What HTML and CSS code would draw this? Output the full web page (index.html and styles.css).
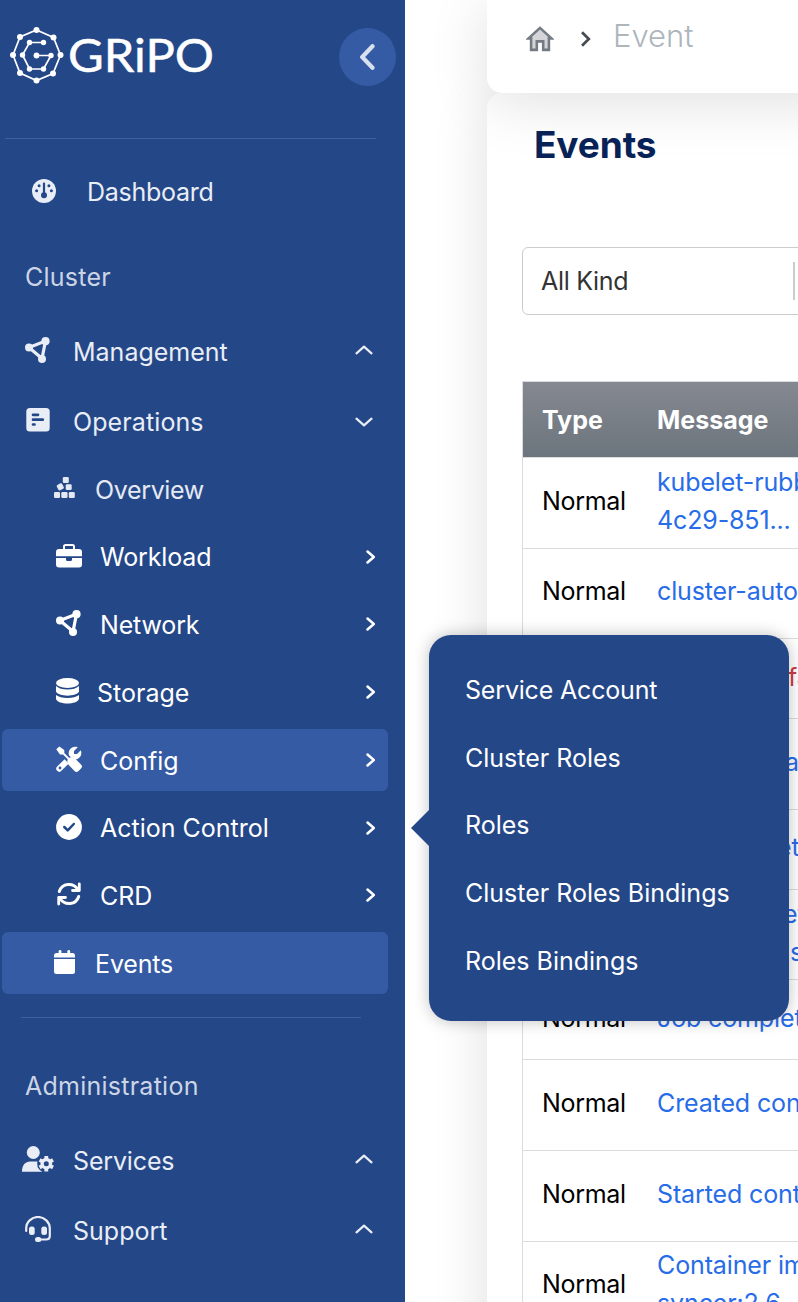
FILE: index.html
```html
<!DOCTYPE html>
<html lang="en">
<head>
<meta charset="utf-8">
<title>Events</title>
<link rel="stylesheet" href="styles.css">
</head>
<body>
<svg class="defs" width="0" height="0" aria-hidden="true">
  <symbol id="net" viewBox="0 0 25 26"><g fill="none" stroke="currentColor" stroke-width="3.200"><path d="M4 10.500 20.500 4 17 21.500Z"/></g><g fill="currentColor"><circle cx="4" cy="10.500" r="4"/><circle cx="20.500" cy="4.200" r="4.100"/><circle cx="17" cy="22" r="4"/></g></symbol>
  <symbol id="right" viewBox="0 0 10 14"><path d="M1.500 1.500 7.800 7 1.500 12.500" fill="none" stroke="currentColor" stroke-width="2.500" stroke-linecap="round" stroke-linejoin="round"/></symbol>
  <symbol id="up" viewBox="0 0 18 10"><path d="M1.500 8.300 9 1.700 16.500 8.300" fill="none" stroke="currentColor" stroke-width="2.200" stroke-linecap="round" stroke-linejoin="round"/></symbol>
  <symbol id="down" viewBox="0 0 18 10"><path d="M1.500 1.700 9 8.300 16.500 1.700" fill="none" stroke="currentColor" stroke-width="2.200" stroke-linecap="round" stroke-linejoin="round"/></symbol>
</svg>
<div class="app">
  <aside class="sidebar">
    <div class="brand">
      <svg class="logo" width="210" height="62" viewBox="0 0 210 62">
        <g fill="none" stroke="#fff" stroke-width="1.700">
          <path d="M27.500 6 44.500 13.500 51.500 31 44 49.500 27.500 56.500 11 49 4 31 11 13Z"/>
          <path d="M34.500 18.500H20.500L13.500 31 20.500 45H34.500L42 31.500H27"/>
        </g>
        <g fill="#fff"><circle cx="27.500" cy="6" r="3"/><circle cx="44.500" cy="13.500" r="3"/><circle cx="51.500" cy="31" r="3"/><circle cx="44" cy="49.500" r="3"/><circle cx="27.500" cy="56.500" r="3"/><circle cx="11" cy="49" r="3"/><circle cx="4" cy="31" r="3"/><circle cx="11" cy="13" r="3"/><circle cx="34.500" cy="18.500" r="2.700"/><circle cx="20.500" cy="18.500" r="2.700"/><circle cx="13.500" cy="31" r="2.700"/><circle cx="20.500" cy="45" r="2.700"/><circle cx="34.500" cy="45" r="2.700"/><circle cx="42" cy="31.500" r="2.700"/><circle cx="27.500" cy="31.500" r="2.900"/></g>
        <text class="wordmark" x="59" y="48" textLength="146" lengthAdjust="spacingAndGlyphs">GRiPO</text>
      </svg>
      <span class="collapse"><svg width="16" height="26" viewBox="0 0 16 26"><path d="M12.500 2.200 2.200 13 12.500 23.800" fill="none" stroke="#d9e0ef" stroke-width="4.200" stroke-linecap="round" stroke-linejoin="round"/></svg></span>
    </div>
    <hr class="rule">
    <nav>
      <a class="item dash"><svg width="24" height="24" viewBox="0 0 24 24"><circle cx="12" cy="12" r="12" fill="currentColor"/><g fill="#244788"><circle cx="7.100" cy="6.700" r="1.500"/><circle cx="16.900" cy="6.700" r="1.500"/><circle cx="4.600" cy="11.700" r="1.500"/><circle cx="19.400" cy="11.700" r="1.500"/><circle cx="12" cy="16.300" r="3"/><rect x="10.900" y="3.500" width="2.200" height="12" rx="1"/></g></svg><span class="t-dash">Dashboard</span></a>
      <h2 class="section">Cluster</h2>
      <a class="item"><svg width="25" height="26"><use href="#net"/></svg><span>Management</span><svg class="caret" width="18" height="10"><use href="#up"/></svg></a>
      <a class="item"><svg width="25" height="24" viewBox="0 0 25 24"><rect x="1.300" width="23.400" height="23.600" rx="3.500" fill="currentColor"/><path d="M8 6.800H13M8 11.700H17.800M8 16.500H9.500" stroke="#244788" stroke-width="2.700" stroke-linecap="round"/></svg><span class="t-ope">Operations</span><svg class="caret open" width="18" height="10"><use href="#down"/></svg></a>
      <div class="sub">
        <a class="subitem leaf dim"><svg width="21" height="21" viewBox="0 0 21 21" fill="currentColor"><rect x="8.800" width="6" height="6" rx="1.300"/><rect x="3.300" y="6.800" width="6" height="6" rx="1.300" transform="rotate(-28 6.300 9.800)"/><rect x="11.700" y="7.300" width="6" height="5.800" rx="1.300"/><rect y="15" width="6" height="6" rx="1.300"/><rect x="7.300" y="15" width="6.200" height="6" rx="1.300"/><rect x="14.800" y="15" width="6" height="6" rx="1.300"/></svg><span class="t-ove">Overview</span></a>
        <a class="subitem"><svg width="26" height="24" viewBox="0 0 26 24"><path d="M8 6V2.500Q8 1 9.500 1H16.500Q18 1 18 2.500V6" fill="none" stroke="currentColor" stroke-width="2"/><path d="M3 5H23Q26 5 26 8V12.300H0V8Q0 5 3 5ZM0 14H10V15.500Q10 17 11.500 17H14.500Q16 17 16 15.500V14H26V20.500Q26 23.500 23 23.500H3Q0 23.500 0 20.500Z" fill="currentColor"/></svg><span class="t-wor">Workload</span><svg class="caret" width="10" height="14"><use href="#right"/></svg></a>
        <a class="subitem"><svg width="26" height="26" viewBox="0 0 26 26"><use href="#net" width="25" height="26"/></svg><span class="t-net">Network</span><svg class="caret" width="10" height="14"><use href="#right"/></svg></a>
        <a class="subitem"><svg width="23" height="26" viewBox="0 0 23 26" fill="currentColor"><ellipse cx="11.500" cy="5" rx="11.500" ry="5"/><path d="M0 8Q4 11.500 11.500 11.500T23 8V13.500C21 19 2 19 0 13.500ZM0 17Q4 20 11.500 20T23 17V21C21 27 2 27 0 21Z"/></svg><span>Storage</span><svg class="caret" width="10" height="14"><use href="#right"/></svg></a>
        <a class="subitem on"><svg width="26" height="26" viewBox="0 0 26 26"><path d="M13.300 12.300 2.600 23" stroke="currentColor" stroke-width="6" stroke-linecap="round" transform="translate(.7 -.3)"/><path d="M24.800 4.200 21 8H18V5L21.800 1.200C16 -.8 11.500 4 13 9.500L17 13.500C22 14.500 27 10 24.800 4.200Z" fill="currentColor"/><path d="M9.500 10 17 17.500" stroke="#345ba4" stroke-width="6"/><path d="M.3 3.300 3.300 .4 8.300 4V7L13 11.700Q17 10.500 19 12.500L25 18.500Q27 20.500 25 22.500L22.500 25Q20.500 27 18.500 25L12.700 19Q10.700 17 11.700 13.200L7 8.500H4Z" fill="currentColor"/><circle cx="4" cy="22" r="1.400" fill="#345ba4"/></svg><span>Config</span><svg class="caret" width="10" height="14"><use href="#right"/></svg></a>
        <a class="subitem"><svg width="26" height="26" viewBox="0 0 26 26"><circle cx="13" cy="13" r="12.900" fill="currentColor"/><path d="M8.300 13 11.700 16.400 17.800 10" fill="none" stroke="#244788" stroke-width="2.500" stroke-linecap="round" stroke-linejoin="round"/></svg><span>Action Control</span><svg class="caret" width="10" height="14"><use href="#right"/></svg></a>
        <a class="subitem"><svg width="26" height="24" viewBox="0 0 26 24"><path d="M3.300 9.500C6 1 17 0 22 7.500M22.700 14.500C20 23 9 24 4 16.500" fill="none" stroke="currentColor" stroke-width="3" stroke-linecap="round"/><path d="M23.300 2V8.500H16.500M2.700 22V15.500H9.500" fill="none" stroke="currentColor" stroke-width="2.800" stroke-linecap="round" stroke-linejoin="round"/></svg><span>CRD</span><svg class="caret" width="10" height="14"><use href="#right"/></svg></a>
        <a class="subitem leaf on"><svg width="21" height="24" viewBox="0 0 21 24" fill="currentColor"><path d="M2.500 3H18.500Q21 3 21 5.500V7.500H0V5.500Q0 3 2.500 3ZM0 9H21V21.500Q21 24 18.500 24H2.500Q0 24 0 21.500Z"/><rect x="4.700" width="2.700" height="6" rx="1.300"/><rect x="13.400" width="2.700" height="6" rx="1.300"/></svg><span class="t-eve">Events</span></a>
      </div>
      <hr class="rule short">
      <h2 class="section admin">Administration</h2>
      <a class="item wide"><svg width="32" height="26" viewBox="0 0 32 26"><g fill="currentColor"><circle cx="11.300" cy="6.500" r="6.500"/><path d="M0 25.700C0 19 3.500 15.500 8 15.500H15.500C14.500 17.500 16 19 15.500 21Q17 24 20.500 25.700Z"/></g><circle cx="24.300" cy="17.700" r="4.200" fill="none" stroke="currentColor" stroke-width="3.400"/><path d="M24.300 10V14M24.300 21.400V25.400M17.600 13.900 21 15.800M27.600 19.600 31 21.500M17.600 21.500 21 19.600M27.600 15.800 31 13.900" stroke="currentColor" stroke-width="3.800"/></svg><span class="t-ser">Services</span><svg class="caret" width="18" height="10"><use href="#up"/></svg></a>
      <a class="item supp"><svg width="26" height="26" viewBox="0 0 26 26"><path d="M1.200 15V12.500A11.800 11.500 0 0 1 24.800 12.500V20Q24.800 23.500 21 23.500H13" fill="none" stroke="currentColor" stroke-width="2.200" stroke-linecap="round"/><g fill="currentColor"><rect x="4" y="10.500" width="5.700" height="8.500" rx="2.500"/><rect x="16.300" y="10.500" width="5.700" height="8.500" rx="2.500"/><rect x="10" y="21" width="6.300" height="5" rx="2.500"/></g></svg><span>Support</span><svg class="caret" width="18" height="10"><use href="#up"/></svg></a>
    </nav>
    <div class="flyout">
      <a class="f-1">Service Account</a><a>Cluster Roles</a><a>Roles</a><a>Cluster Roles Bindings</a><a>Roles Bindings</a>
    </div>
  </aside>
  <main class="main">
    <header class="topbar">
      <svg width="28" height="26" viewBox="0 0 28 26"><path d="M14 1.900 2.500 12.400H5.100V23.900H10.800V15.400H17.200V23.900H22.900V12.400H25.500Z" fill="#d3d5d8" stroke="#747b82" stroke-width="2.600"/></svg>
      <svg class="sep" width="11" height="18" viewBox="0 0 11 18"><path d="M2 2.300 8.800 9 2 15.700" fill="none" stroke="#454b52" stroke-width="2.700"/></svg>
      <span class="crumb">Event</span>
    </header>
    <section class="panel">
      <h1>Events</h1>
      <div class="select"><span>All Kind</span><i></i></div>
      <div class="table">
        <div class="row head"><b>Type</b><b>Message</b></div>
        <div class="row tall"><span>Normal</span><a>kubelet-rubber<br>4c29-851...</a></div>
        <div class="row tall"><span>Normal</span><a>cluster-autoscaler</a></div>
        <div class="row"><span>Normal</span><a class="warn tail-f">failed</a></div>
        <div class="row tall"><span>Normal</span><a class="tail-a">assigned</a></div>
        <div class="row"><span>Normal</span><a class="tail-c">eted</a></div>
        <div class="row tall"><span>Normal</span><a class="tail-e">et<br><em>s</em></a></div>
        <div class="row"><span>Normal</span><a>Job completed</a></div>
        <div class="row tall"><span>Normal</span><a>Created container</a></div>
        <div class="row tall"><span>Normal</span><a>Started container</a></div>
        <div class="row tall"><span>Normal</span><a>Container image<br>syncer:2.6</a></div>
      </div>
    </section>
  </main>
</div>
</body>
</html>
```
FILE: styles.css
```css
* { box-sizing: border-box; }
body { margin: 0; background: #fff; font: 25px/38px Inter, sans-serif; overflow: hidden; }
svg { display: block; flex: none; }
.defs { position: absolute; }
.app { display: flex; width: 798px; height: 1302px; overflow: hidden; }
.sidebar { position: relative; z-index: 2; flex: none; width: 405px; background: #244788; color: #e9edf5; }
.brand { display: flex; align-items: flex-start; justify-content: space-between; height: 138px; padding: 24px 9px 0 9px; }
.wordmark { font: 46px Lato, sans-serif; fill: #fff; stroke: #fff; stroke-width: .5; }
.collapse { display: flex; align-items: center; justify-content: center; width: 57px; height: 58px; margin-top: 4px; border-radius: 50%; background: #345ba4; }
.rule { width: 371px; height: 1px; margin: 0 0 0 5px; border: 0; background: #3e60a0; }
.item { display: flex; align-items: center; height: 70px; padding: 0 32px 0 25px; white-space: nowrap; }
.item > svg:first-child { position: relative; top: -2px; margin-right: 23px; }
.item .caret, .subitem .caret { margin-left: auto; }
.item .caret { position: relative; top: -2px; }
.item .caret.open { top: 0; }
.item.wide { padding-left: 22px; }
.item.wide > svg:first-child { margin-right: 19px; }
.item.supp > svg:first-child { margin-right: 22px; }
.item.dash { height: 106px; padding-left: 32px; }
.item.dash > svg:first-child { top: -1px; margin-right: 31px; }
.t-dash { letter-spacing: -.27px; }
.t-ope { letter-spacing: .1px; }
.t-ser { letter-spacing: -.15px; }
.section { height: 72px; margin: 0; padding: 13px 0 0 25px; font-size: 25px; font-weight: 400; letter-spacing: .25px; color: #ccd5e5; }
.sub { display: grid; grid-auto-rows: 61.6px; row-gap: 6.2px; padding: 1px 17px 0 2px; }
.subitem { display: flex; align-items: center; padding: 0 12px 0 54px; border-radius: 6px; color: #fff; white-space: nowrap; }
.subitem > svg:first-child { position: relative; top: -1px; margin-right: 18px; }
.subitem > span { padding-top: 1.500px; }
.subitem.leaf { padding-left: 52px; }
.subitem.leaf > svg:first-child { margin-right: 20px; }
.t-ove { letter-spacing: -.35px; }
.t-wor, .t-net { letter-spacing: -.15px; }
.t-eve { letter-spacing: -.15px; }
.subitem.dim { color: #e4e9f2; }
.subitem.on { background: #345ba4; }
.rule.short { width: 340px; margin: 23px 0 0 21px; }
.section.admin { height: 108px; padding-top: 49px; }
.flyout { position: absolute; left: 429px; top: 635px; width: 360px; height: 386px; padding: 21.5px 36px; border-radius: 22px; background: #244788; box-shadow: 0 0 16px rgba(0,0,0,.25); color: #fff; display: grid; grid-auto-rows: 67.6px; align-items: center; white-space: nowrap; }
.flyout::before { content: ""; position: absolute; left: -18px; top: 175px; border: 18px solid transparent; border-left: 0; border-right-color: #244788; }
.f-1 { letter-spacing: -.18px; }
.main { flex: none; width: 500px; margin-left: 82px; }
.topbar { position: relative; z-index: 1; display: flex; align-items: center; height: 93px; padding: 0 0 16px 39px; border-radius: 0 0 0 15px; background: #fff; box-shadow: 0 8px 60px rgba(0,0,0,.13); }
.sep { margin: 0 22px 0 26px; }
.crumb { margin-top: -5px; font-size: 31px; font-weight: 300; color: #adb5bd; }
.panel { position: relative; height: 1309px; padding: 33px 0 0 35px; border-radius: 15px 0 0 0; box-shadow: 0 8px 56px rgba(0,0,0,.13); }
h1 { position: relative; z-index: 2; margin: 0 0 0 12px; font-size: 37px; line-height: 38px; font-weight: 700; letter-spacing: -.1px; color: #072256; }
.select { display: flex; align-items: center; justify-content: space-between; width: 290px; height: 68px; margin-top: 83px; padding: 0 16px 0 18px; border: 1px solid #ccc; border-radius: 6px; letter-spacing: -.3px; color: #333; }
.select i { width: 2px; height: 38px; background: #ccc; }
.table { margin-top: 66px; border: 1px solid #dadbdd; border-right: 0; }
.row { display: grid; grid-template-columns: 115px 1fr; align-items: center; height: 80px; padding: 0 0 4px 19px; border-bottom: 1px solid #dadbdd; color: #000; white-space: nowrap; }
.row.tall { height: 90.6px; }
.row.head { height: 76px; padding-bottom: 0; background: linear-gradient(#858891, #6c757d); color: #fff; }
.row span { letter-spacing: -.3px; }
.row a { letter-spacing: -.13px; color: #276ce8; }
.row .warn { color: #cf3c45; }
.row .tail-f { padding-left: 131px; }
.row .tail-a { padding-left: 128px; }
.row .tail-c { padding-left: 120px; }
.row .tail-e { padding-left: 126px; }
.row em { font-style: normal; padding-left: 7px; }
```
